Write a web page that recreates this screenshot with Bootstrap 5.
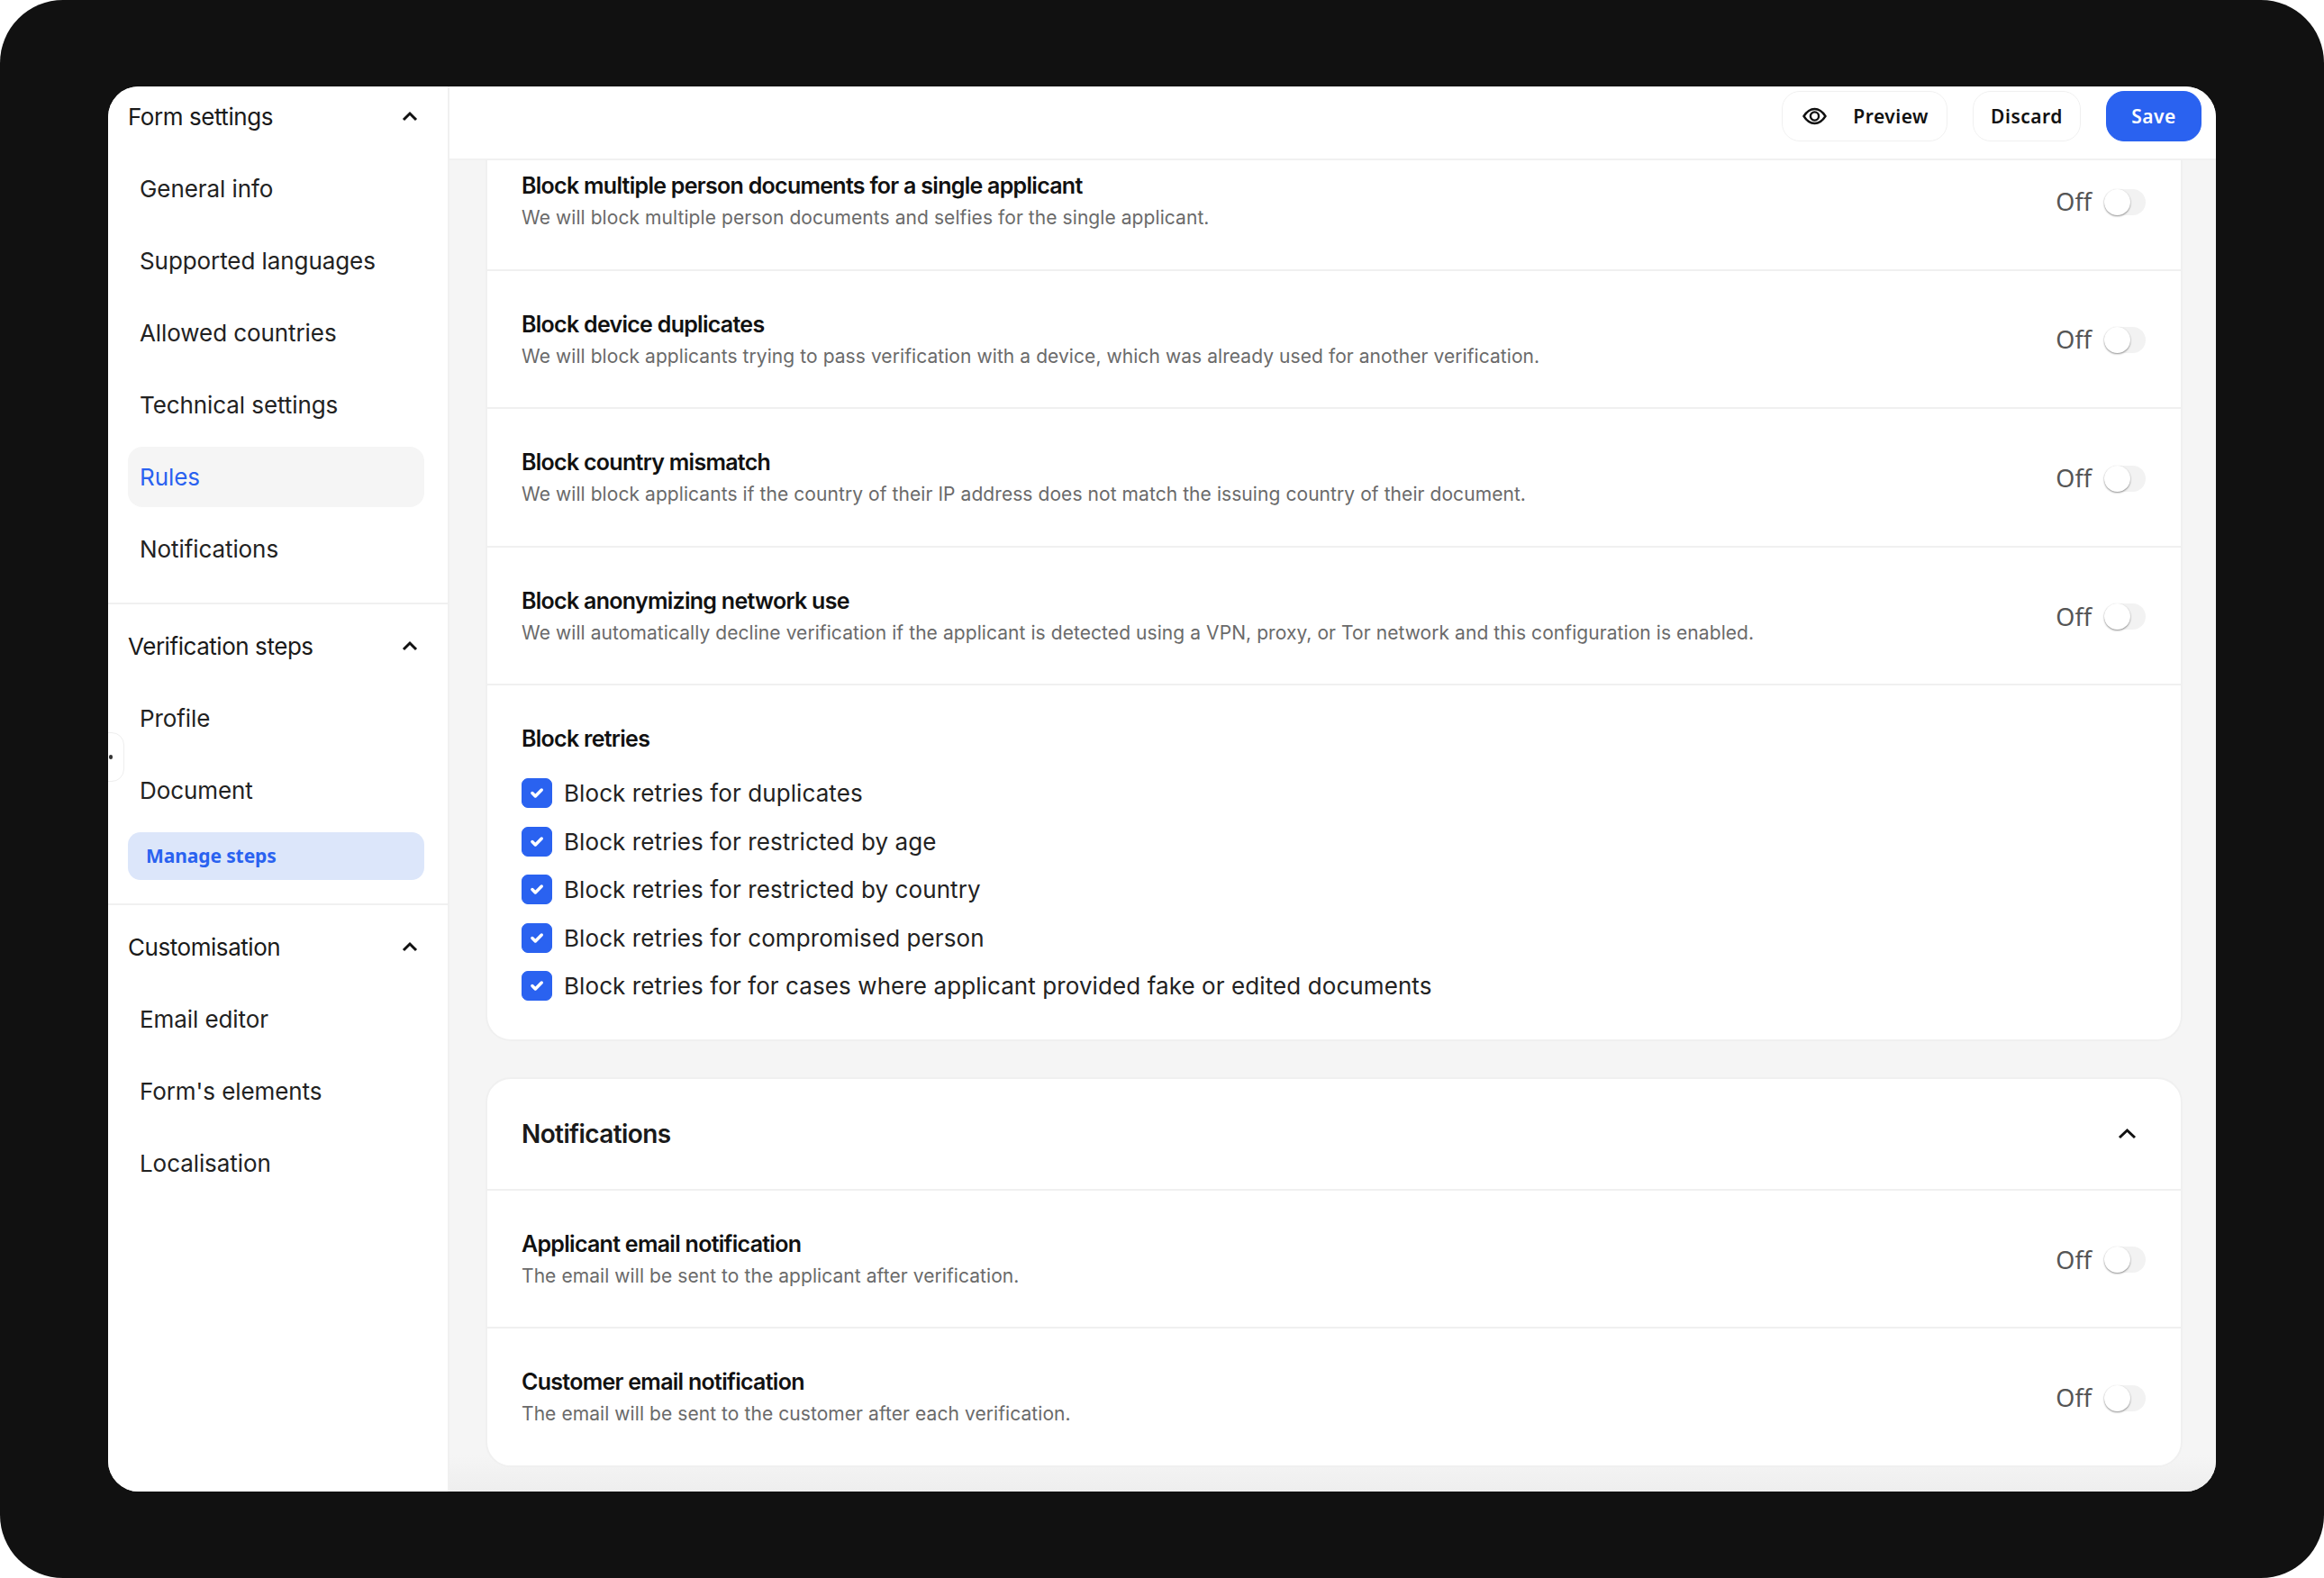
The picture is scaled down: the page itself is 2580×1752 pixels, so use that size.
<!DOCTYPE html>
<html lang="en">
<head>
<meta charset="utf-8">
<title>Form settings</title>
<link rel="stylesheet" href="https://cdn.jsdelivr.net/npm/bootstrap@5.3.0/dist/css/bootstrap.min.css">
<style>
html,body{margin:0;background:#fff;}
body{font-family:"Inter","Liberation Sans",sans-serif;}
.device{width:2580px;height:1752px;background:#111;border-radius:70px;padding:96px 120px;}
.win{height:1560px;background:#f5f5f5;border-radius:34px;overflow:hidden;position:relative;}
.side{width:379px;flex:none;background:#fff;border-right:2px solid #f0f0f0;}
.sec{padding:0 26px 13px 22px;border-bottom:2px solid #f0f0f0;}
.sec:last-child{border-bottom:0;}
.sec+.sec{padding-top:13px;}
.sec-h{height:66px;margin-bottom:14px;font-size:26px;letter-spacing:-.45px;color:#1a1a1a;}
.sec-h svg{width:20px;height:12px;margin-right:6px;}
.itm{height:67px;margin-bottom:13px;padding:0 13px;font-size:26px;letter-spacing:-.08px;color:#222;border-radius:16px;display:flex;align-items:center;}
.itm.on{background:#f5f5f5;color:#2a62f0;}
.mng{height:53px;margin-bottom:13px;padding:0 20px;font-family:"Noto Sans",sans-serif;font-size:21px;font-weight:700;letter-spacing:-.1px;color:#2a62f0;background:#dce6fa;border-radius:14px;display:flex;align-items:center;}
.handle{position:absolute;left:-20px;top:717px;width:38px;height:55px;border:1px solid #eee;border-radius:14px;background:#fff;}
.handle i{position:absolute;left:20px;top:24px;width:4px;height:5px;background:#333;border-radius:2px;}
.bar{height:82px;flex:none;background:#fff;border-bottom:2px solid #f1f1f1;padding:5px 16px 0 0;gap:28px;}
.tb{height:56px;border-radius:20px;border:1.5px solid #f0f0f0;background:#fff;color:#111;font-family:"Noto Sans",sans-serif;font-size:21px;font-weight:600;letter-spacing:.5px;padding:1px 20px 0;display:flex;align-items:center;}
.tb.prev{width:184px;padding:1px 20px 0 22px;justify-content:space-between;}
.tb.save{width:106px;background:#2a62f0;border-color:#2a62f0;color:#fff;justify-content:center;padding:1px 0 0;}
.tb.disc{width:120px;justify-content:center;padding:1px 0 0;}
.tb svg{width:27px;height:20px;margin-top:-1px;}
.pane{padding:0 37px 0 40px;background:linear-gradient(to bottom,#f5f5f5 calc(100% - 40px),#eee);overflow:hidden;}
.box{background:#fff;border:2px solid #f0f0f0;border-radius:28px;margin-bottom:39.500px;}
.box.first{border-top:0;border-top-left-radius:0;border-top-right-radius:0;}
.rw{padding:41px 39px 38.6px 38px;border-bottom:2px solid #f0f0f0;}
.rw.top{padding-top:10px;padding-bottom:38.600px;}
.rw.end{border-bottom:0;}
.ttl{font-size:25px;line-height:36px;font-weight:600;letter-spacing:-.72px;color:#111;}
.dsc{font-size:21px;line-height:36px;color:#6a6a6a;letter-spacing:.07px;}
.off{font-family:"Noto Sans",sans-serif;font-size:27px;color:#555;margin-right:14px;}
.trk{width:46px;height:29px;background:#f2f2f2;border-radius:15px;position:relative;display:block;}
.trk::after{content:"";position:absolute;left:0;top:0;width:29px;height:29px;background:#fff;border-radius:50%;box-shadow:0 1px 2px rgba(0,0,0,.45);}
.retr{padding:41px 38px 43px;}
.retr .ttl{margin-bottom:26px;}
.form-check.opt{display:flex;align-items:center;min-height:33px;margin:0 0 20.5px;padding:0;gap:13px;}
.form-check.opt:last-child{margin-bottom:0;}
.opt .form-check-input{width:34px;height:33px;margin:0;float:none;flex:none;border-radius:7px;background-color:#2a62f0;border-color:#2a62f0;background-size:72%;}
.opt .form-check-label{font-size:26px;line-height:33px;color:#222;letter-spacing:.09px;}
.hd{height:124px;padding:0 49px 0 38px;border-bottom:2px solid #f0f0f0;}
.hd b{font-size:28px;font-weight:600;letter-spacing:-.6px;color:#1a1a1a;}
.hd svg{width:21px;height:13px;}
</style>
</head>
<body>
<div class="device">
<div class="win d-flex">
  <aside class="side">
    <div class="sec">
      <div class="sec-h d-flex align-items-center justify-content-between">Form settings<svg viewBox="0 0 20 12" fill="none" stroke="#111" stroke-width="3"><path d="M3 10l7-7 7 7"/></svg></div>
      <div class="itm">General info</div>
      <div class="itm">Supported languages</div>
      <div class="itm">Allowed countries</div>
      <div class="itm">Technical settings</div>
      <div class="itm on">Rules</div>
      <div class="itm">Notifications</div>
    </div>
    <div class="sec">
      <div class="sec-h d-flex align-items-center justify-content-between">Verification steps<svg viewBox="0 0 20 12" fill="none" stroke="#111" stroke-width="3"><path d="M3 10l7-7 7 7"/></svg></div>
      <div class="itm">Profile</div>
      <div class="itm">Document</div>
      <div class="mng">Manage steps</div>
    </div>
    <div class="sec">
      <div class="sec-h d-flex align-items-center justify-content-between">Customisation<svg viewBox="0 0 20 12" fill="none" stroke="#111" stroke-width="3"><path d="M3 10l7-7 7 7"/></svg></div>
      <div class="itm">Email editor</div>
      <div class="itm">Form's elements</div>
      <div class="itm">Localisation</div>
    </div>
  </aside>
  <div class="handle"><i></i></div>
  <main class="flex-grow-1 d-flex flex-column" style="min-width:0">
    <div class="bar d-flex align-items-start justify-content-end">
      <button type="button" class="btn tb prev"><svg viewBox="0 0 27 20" fill="none" stroke="#111" stroke-width="2.4"><path d="M1.5 10C5 4.5 9 2 13.5 2S22 4.500 25.500 10C22 15.500 18 18 13.500 18S5 15.500 1.500 10Z"/><circle cx="13.5" cy="10" r="4.600"/></svg><span>Preview</span></button>
      <button type="button" class="btn tb disc">Discard</button>
      <button type="button" class="btn tb save">Save</button>
    </div>
    <div class="pane flex-grow-1">
      <section class="box first">
        <div class="rw top d-flex align-items-center justify-content-between">
          <div><div class="ttl">Block multiple person documents for a single applicant</div><div class="dsc">We will block multiple person documents and selfies for the single applicant.</div></div>
          <div class="d-flex align-items-center"><span class="off">Off</span><span class="trk"></span></div>
        </div>
        <div class="rw d-flex align-items-center justify-content-between">
          <div><div class="ttl">Block device duplicates</div><div class="dsc">We will block applicants trying to pass verification with a device, which was already used for another verification.</div></div>
          <div class="d-flex align-items-center"><span class="off">Off</span><span class="trk"></span></div>
        </div>
        <div class="rw d-flex align-items-center justify-content-between">
          <div><div class="ttl">Block country mismatch</div><div class="dsc">We will block applicants if the country of their IP address does not match the issuing country of their document.</div></div>
          <div class="d-flex align-items-center"><span class="off">Off</span><span class="trk"></span></div>
        </div>
        <div class="rw d-flex align-items-center justify-content-between">
          <div><div class="ttl">Block anonymizing network use</div><div class="dsc">We will automatically decline verification if the applicant is detected using a VPN, proxy, or Tor network and this configuration is enabled.</div></div>
          <div class="d-flex align-items-center"><span class="off">Off</span><span class="trk"></span></div>
        </div>
        <div class="retr">
          <div class="ttl">Block retries</div>
          <div class="form-check opt"><input class="form-check-input" type="checkbox" id="c1" checked><label class="form-check-label" for="c1">Block retries for duplicates</label></div>
          <div class="form-check opt"><input class="form-check-input" type="checkbox" id="c2" checked><label class="form-check-label" for="c2">Block retries for restricted by age</label></div>
          <div class="form-check opt"><input class="form-check-input" type="checkbox" id="c3" checked><label class="form-check-label" for="c3">Block retries for restricted by country</label></div>
          <div class="form-check opt"><input class="form-check-input" type="checkbox" id="c4" checked><label class="form-check-label" for="c4">Block retries for compromised person</label></div>
          <div class="form-check opt"><input class="form-check-input" type="checkbox" id="c5" checked><label class="form-check-label" for="c5">Block retries for for cases where applicant provided fake or edited documents</label></div>
        </div>
      </section>
      <section class="box">
        <div class="hd d-flex align-items-center justify-content-between"><b>Notifications</b><svg viewBox="0 0 21 13" fill="none" stroke="#111" stroke-width="3"><path d="M2 11l8.500-8 8.500 8"/></svg></div>
        <div class="rw d-flex align-items-center justify-content-between">
          <div><div class="ttl">Applicant email notification</div><div class="dsc">The email will be sent to the applicant after verification.</div></div>
          <div class="d-flex align-items-center"><span class="off">Off</span><span class="trk"></span></div>
        </div>
        <div class="rw end d-flex align-items-center justify-content-between">
          <div><div class="ttl">Customer email notification</div><div class="dsc">The email will be sent to the customer after each verification.</div></div>
          <div class="d-flex align-items-center"><span class="off">Off</span><span class="trk"></span></div>
        </div>
      </section>
    </div>
  </main>
</div>
</div>
<script src="https://cdn.jsdelivr.net/npm/bootstrap@5.3.0/dist/js/bootstrap.bundle.min.js"></script>
</body>
</html>
